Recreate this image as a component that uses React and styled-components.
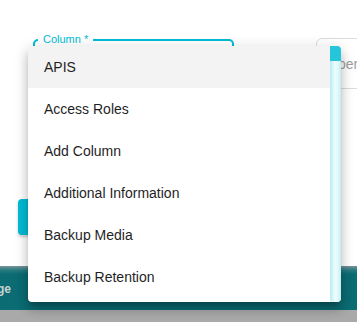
import React from "react";
import styled, { createGlobalStyle } from "styled-components";

const GlobalStyle = createGlobalStyle`
  body {
    margin: 0;
    font-family: "Liberation Sans", Arial, sans-serif;
    overflow: hidden;
  }
`;

const Page = styled.div`
  display: flex;
  flex-direction: column;
  width: 357px;
  height: 322px;
  overflow: hidden;
`;

const Dialog = styled.div`
  position: relative;
  height: 266px;
  background: #fff;
  padding-top: 33px;
  box-sizing: border-box;
`;

const FieldRow = styled.div`
  display: flex;
  align-items: flex-start;
  padding-left: 33px;
  gap: 82px;
`;

const Fieldset = styled.fieldset`
  flex-shrink: 0;
  margin: 0;
  width: 201px;
  height: 56px;
  box-sizing: border-box;
  padding: 0 0 0 3px;
  border: 2px solid #00bcd4;
  border-radius: 5px;
  min-width: 0;
`;

const Legend = styled.legend`
  padding: 0 5px;
  font-size: 11px;
  line-height: 13px;
  color: #00bcd4;
`;

const TextBox = styled.div`
  margin-top: 5px;
  width: 120px;
  height: 51px;
  flex-shrink: 0;
  box-sizing: border-box;
  border: 1px solid #dcdcdc;
  border-radius: 6px;
  display: flex;
  align-items: center;
  padding-left: 10px;
  font-size: 14px;
  color: #9e9e9e;
  white-space: nowrap;
`;

const ButtonRow = styled.div`
  padding-left: 18px;
  margin-top: 110px;
`;

const Button = styled.button`
  width: 120px;
  height: 36px;
  border: none;
  border-radius: 4px;
  background: #00bcd4;
  box-shadow: 0 2px 3px rgba(0, 0, 0, 0.2);
`;

const Footer = styled.div`
  height: 44px;
  background: linear-gradient(#7c9497 0, #2a7c82 4px, #0b6c73 8px, #0b6c73);
  display: flex;
  align-items: center;
`;

const FooterText = styled.span`
  margin-left: -25px;
  margin-top: 2px;
  font-size: 12px;
  font-weight: bold;
  color: #c9d3d4;
`;

const Backdrop = styled.div`
  flex: 1;
  background: #a9a9a9;
`;

const Menu = styled.div`
  position: absolute;
  left: 28px;
  top: 46px;
  width: 313px;
  height: 256px;
  display: flex;
  background: #fff;
  border-radius: 4px;
  overflow: hidden;
  box-shadow: 0 5px 5px -3px rgba(0, 0, 0, 0.2), 0 8px 10px 1px rgba(0, 0, 0, 0.14),
    0 3px 14px 2px rgba(0, 0, 0, 0.12);
`;

const List = styled.ul`
  flex: 1;
  margin: 0;
  padding: 0;
  list-style: none;
  overflow: hidden;
`;

const Item = styled.li`
  height: 42px;
  display: flex;
  align-items: center;
  padding: 0 16px;
  font-size: 14px;
  color: #1f1f1f;
  background: ${({ $active }) => ($active ? "#f3f3f3" : "#fff")};
`;

const Track = styled.div`
  width: 11px;
  display: flex;
  flex-direction: column;
  background: linear-gradient(to right, #b6ecf3, #effcfd 45%, #e4f8fb 70%, #bfeef4);
  border-radius: 0 0 3px 3px;
`;

const Thumb = styled.div`
  height: 15px;
  background: #26c6da;
`;

const options = [
  "APIS",
  "Access Roles",
  "Add Column",
  "Additional Information",
  "Backup Media",
  "Backup Retention",
];

export default function App() {
  return (
    <Page>
      <GlobalStyle />
      <Dialog>
        <FieldRow>
          <Fieldset>
            <Legend>Column *</Legend>
          </Fieldset>
          <TextBox>Operator</TextBox>
        </FieldRow>
        <ButtonRow>
          <Button />
        </ButtonRow>

        <Menu>
          <List>
            {options.map((o, i) => (
              <Item key={o} $active={i === 0}>
                {o}
              </Item>
            ))}
          </List>
          <Track>
            <Thumb />
          </Track>
        </Menu>
      </Dialog>
      <Footer>
        <FooterText>Usage</FooterText>
      </Footer>
      <Backdrop />
    </Page>
  );
}
